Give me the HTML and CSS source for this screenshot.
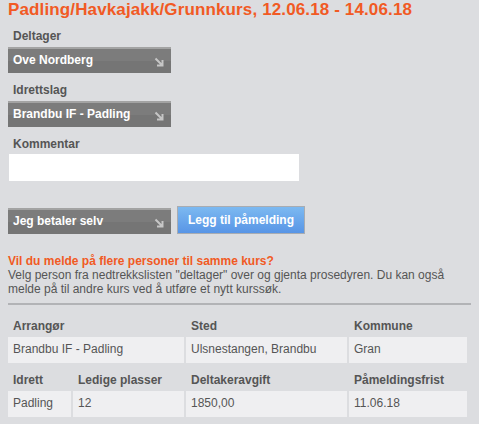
FILE: index.html
```html
<!DOCTYPE html>
<html lang="no">
<head>
<meta charset="utf-8">
<title>Påmelding</title>
<link rel="stylesheet" href="styles.css">
</head>
<body>
<div class="page">
  <h1 class="title">Padling/Havkajakk/Grunnkurs, 12.06.18 - 14.06.18</h1>

  <div class="field">
    <div class="label">Deltager</div>
    <div class="select">
      <span>Ove Nordberg</span>
      <svg class="arrow" width="10" height="10" viewBox="0 0 10 10"><path d="M1.5 1.5 L8 8 M8.5 3 V8.5 H3" fill="none" stroke="#c6c6c6" stroke-width="2"/></svg>
    </div>
  </div>

  <div class="field">
    <div class="label">Idrettslag</div>
    <div class="select">
      <span>Brandbu IF - Padling</span>
      <svg class="arrow" width="10" height="10" viewBox="0 0 10 10"><path d="M1.5 1.5 L8 8 M8.5 3 V8.5 H3" fill="none" stroke="#c6c6c6" stroke-width="2"/></svg>
    </div>
  </div>

  <div class="field">
    <div class="label label-tight">Kommentar</div>
    <div class="textarea"></div>
  </div>

  <div class="actions">
    <div class="select">
      <span>Jeg betaler selv</span>
      <svg class="arrow" width="10" height="10" viewBox="0 0 10 10"><path d="M1.5 1.5 L8 8 M8.5 3 V8.5 H3" fill="none" stroke="#c6c6c6" stroke-width="2"/></svg>
    </div>
    <div class="button">Legg til påmelding</div>
  </div>

  <div class="info">
    <div class="question">Vil du melde på flere personer til samme kurs?</div>
    <div class="text">Velg person fra nedtrekkslisten "deltager" over og gjenta prosedyren. Du kan også melde på til andre kurs ved å utføre et nytt kurssøk.</div>
  </div>

  <div class="rule"></div>

  <table class="details">
    <colgroup>
      <col class="c1"><col class="c2"><col class="c3"><col class="c4">
    </colgroup>
    <tr>
      <th colspan="2">Arrangør</th>
      <th>Sted</th>
      <th>Kommune</th>
    </tr>
    <tr>
      <td colspan="2">Brandbu IF - Padling</td>
      <td>Ulsnestangen, Brandbu</td>
      <td>Gran</td>
    </tr>
    <tr>
      <th>Idrett</th>
      <th>Ledige plasser</th>
      <th>Deltakeravgift</th>
      <th>Påmeldingsfrist</th>
    </tr>
    <tr>
      <td>Padling</td>
      <td>12</td>
      <td>1850,00</td>
      <td>11.06.18</td>
    </tr>
  </table>
</div>
</body>
</html>
```

FILE: styles.css
```css
html, body {
  margin: 0;
  padding: 0;
  background: #dcdde0;
}
body {
  font-family: "Liberation Sans", Arial, sans-serif;
  font-size: 12px;
  color: #555555;
}
.page {
  padding: 0 8px;
}
.title {
  margin: 0;
  font-size: 17px;
  letter-spacing: 0.13px;
  line-height: 20px;
  font-weight: bold;
  color: #f15a24;
}
.field {
  margin-top: 9px;
}
.field + .field {
  margin-top: 10px;
}
.label {
  padding-left: 5px;
  font-weight: bold;
  line-height: 15px;
  margin-bottom: 3px;
  color: #555555;
}
.label-tight {
  margin-bottom: 2px;
}
.select {
  box-sizing: border-box;
  width: 163px;
  height: 26px;
  border-top: 2px solid #a3a3a3;
  background: linear-gradient(#7c7c7c 0, #7c7c7c 50%, #757575 50%, #757575 100%);
  display: flex;
  align-items: center;
  justify-content: space-between;
  padding: 0 7px 0 5px;
  color: #ffffff;
  font-weight: bold;
  line-height: 15px;
}
.select span {
  margin-top: -1px;
}
.arrow {
  display: block;
  margin-top: 1px;
}
.textarea {
  margin-left: 1px;
  width: 290px;
  height: 27px;
  background: #ffffff;
}
.actions {
  display: flex;
  align-items: flex-end;
  gap: 6px;
  margin-top: 25px;
}
.button {
  box-sizing: border-box;
  width: 128px;
  height: 28px;
  border: 1px solid #a8acb2;
  background: linear-gradient(#7cb9f1, #5895e6);
  color: #ffffff;
  font-weight: bold;
  line-height: 15px;
  display: flex;
  align-items: center;
  justify-content: center;
}
.info {
  margin-top: 20px;
  line-height: 14px;
}
.question {
  color: #f15a24;
  font-weight: bold;
}
.text {
  color: #555555;
}
.rule {
  margin-top: 7px;
  height: 2px;
  background: #b2b3b6;
}
.details {
  border-collapse: separate;
  border-spacing: 2px;
  margin: 4px -2px 0;
  width: 463px;
  table-layout: fixed;
}
.c1 { width: 63px; }
.c2 { width: 111px; }
.c3 { width: 161px; }
.c4 { width: 118px; }
.details th {
  text-align: left;
  font-weight: bold;
  color: #555555;
  padding: 8px 5px 1px;
  line-height: 15px;
  white-space: nowrap;
}
.details td {
  background: #efeff1;
  color: #555555;
  padding: 5px 5px 6px;
  line-height: 15px;
  white-space: nowrap;
}
```
